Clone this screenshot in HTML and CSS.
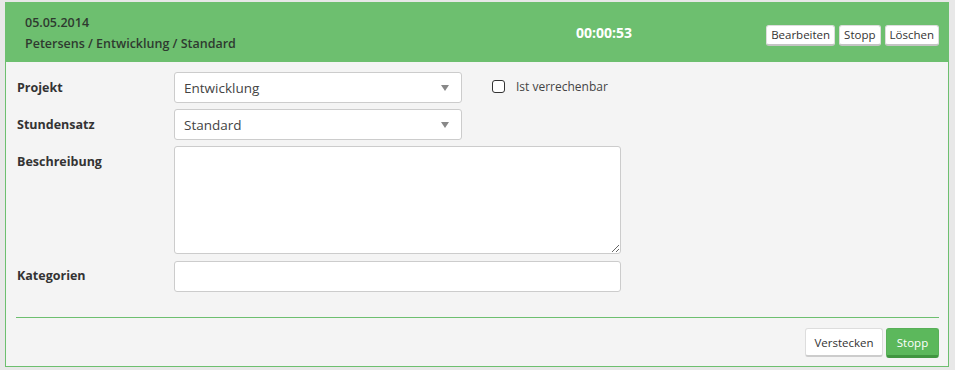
FILE: index.html
```html
<!DOCTYPE html>
<html>
<head>
<meta charset="utf-8">
<link rel="stylesheet" href="styles.css">
</head>
<body>
<div class="panel">
  <div class="panel-head">
    <div class="head-info">
      <div class="date">05.05.2014</div>
      <div class="path">Petersens / Entwicklung / Standard</div>
    </div>
    <div class="timer">00:00:53</div>
    <div class="head-actions">
      <button class="btn-sm">Bearbeiten</button>
      <button class="btn-sm">Stopp</button>
      <button class="btn-sm">Löschen</button>
    </div>
  </div>
  <div class="panel-body">
    <div class="row">
      <label class="lbl">Projekt</label>
      <div class="select"><span>Entwicklung</span><i class="caret"></i></div>
      <label class="check"><span class="box"></span>Ist verrechenbar</label>
    </div>
    <div class="row">
      <label class="lbl">Stundensatz</label>
      <div class="select"><span>Standard</span><i class="caret"></i></div>
    </div>
    <div class="row">
      <label class="lbl">Beschreibung</label>
      <textarea class="textarea"></textarea>
    </div>
    <div class="row">
      <label class="lbl">Kategorien</label>
      <input class="input" type="text">
    </div>
    <hr class="sep">
    <div class="foot">
      <button class="btn btn-default">Verstecken</button>
      <button class="btn btn-success">Stopp</button>
    </div>
  </div>
</div>
</body>
</html>
```

FILE: styles.css
```css
* { box-sizing: border-box; }
html, body { margin: 0; }
body {
  background: #e8e8e8;
  padding: 2px 6px 3px 5px;
  font-family: "Open Sans", "Liberation Sans", sans-serif;
  font-size: 13px;
  color: #333;
}
.panel { width: 944px; }
.panel-head {
  background: #6dbf6f;
  height: 60px;
  display: flex;
  align-items: center;
  padding: 0 10px 0 20px;
}
.head-info { width: 551px; font-weight: 600; font-size: 12.5px; color: #2f3a2f; }
.date { line-height: 18px; margin-top: 2px; }
.path { line-height: 18px; margin-top: 3px; }
.timer { color: #fff; font-weight: 700; font-size: 14px; margin-top: 1px; }
.head-actions { margin-left: auto; display: flex; gap: 4px; margin-top: 6px; }
.btn-sm {
  font-family: inherit;
  font-size: 11.5px;
  color: #333;
  background: #fff;
  border: 1px solid #ddd;
  border-bottom: 2px solid #c4c4c4;
  border-radius: 3px;
  height: 21px;
  padding: 0 4px;
  line-height: 17px;
}
.panel-body {
  background: #f4f4f4;
  border: 1px solid #6dbf6f;
  border-top: none;
  padding: 10px 9px 8px 11px;
}
.row { display: flex; align-items: flex-start; margin-bottom: 6px; }
.lbl {
  width: 157px;
  font-weight: 700;
  font-size: 12.5px;
  padding-top: 7px;
  line-height: 18px;
  color: #333;
}
.select {
  width: 288px;
  height: 31px;
  background: #fff;
  border: 1px solid #ccc;
  border-radius: 3px;
  display: flex;
  align-items: center;
  padding: 0 12px 0 9px;
  font-size: 13.5px;
  color: #444;
}
.select span { flex: 1; }
.caret {
  width: 0; height: 0;
  border-left: 4px solid transparent;
  border-right: 4px solid transparent;
  border-top: 6px solid #888;
}
.check {
  display: flex;
  align-items: center;
  margin-left: 30px;
  height: 31px;
  font-size: 12px;
  color: #444;
  margin-top: -1px;
}
.box {
  width: 13px; height: 13px;
  border: 1px solid #333;
  border-radius: 3px;
  background: #fff;
  margin-right: 11px;
}
.textarea {
  width: 447px;
  height: 108px;
  background: #fff;
  border: 1px solid #ccc;
  border-radius: 3px;
  resize: vertical;
  margin: 0;
}
.input {
  width: 447px;
  height: 31px;
  background: #fff;
  border: 1px solid #ccc;
  border-radius: 3px;
  margin: 1px 0 0;
}
.sep {
  border: none;
  border-top: 1px solid #6dbf6f;
  margin: 25px 0 10px -1px;
  height: 0;
}
.foot { display: flex; justify-content: flex-end; gap: 3px; }
.btn {
  font-family: inherit;
  font-size: 11.5px;
  height: 29px;
  border-radius: 3px;
  padding: 0 8px;
}
.btn-default {
  background: #fff;
  color: #333;
  border: 1px solid #ddd;
  border-bottom: 2px solid #ccc;
  width: 78px;
}
.btn-success {
  background: #5cb85c;
  color: #fff;
  border: 1px solid #58b058;
  border-bottom: 3px solid #419641;
  width: 53px;
  height: 30px;
}
```
